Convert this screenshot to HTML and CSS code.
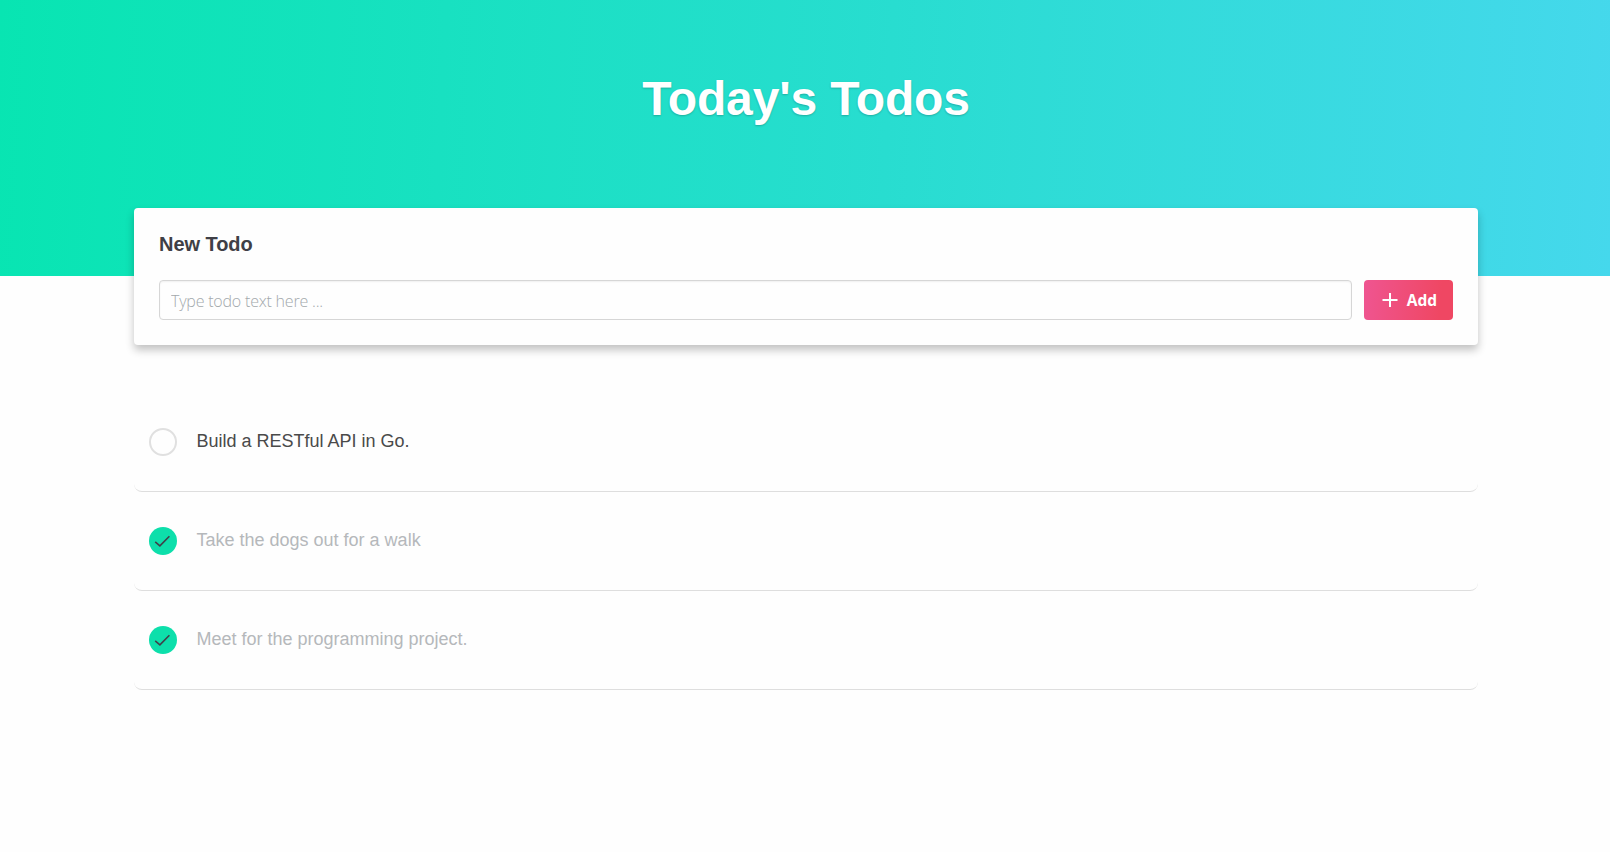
FILE: index.html
```
<!DOCTYPE html>
<html lang="en">
<head>
<meta charset="utf-8">
<title>Today's Todos</title>
<link rel="stylesheet" href="styles.css">
</head>
<body>
<header class="hero"><h1 class="hero-title">Today's Todos</h1></header>
<main class="container">
  <section class="card">
    <h2 class="card-title">New Todo</h2>
    <form class="form">
      <input class="input" type="text" placeholder="Type todo text here ...">
      <button class="button" type="button">
        <svg class="plus" viewBox="0 0 16 16"><path d="M8 1v14M.5 8h15"/></svg>
        <span>Add</span>
      </button>
    </form>
  </section>
  <ul class="list">
    <li class="todo"><span class="check"></span><span class="text">Build a RESTful API in Go.</span></li>
    <li class="todo done"><span class="check"><svg class="tick" viewBox="0 0 28 28"><path d="M6.2 14.8l4.7 4L20.4 9.2"/></svg></span><span class="text">Take the dogs out for a walk</span></li>
    <li class="todo done"><span class="check"><svg class="tick" viewBox="0 0 28 28"><path d="M6.2 14.8l4.7 4L20.4 9.2"/></svg></span><span class="text">Meet for the programming project.</span></li>
  </ul>
</main>
</body>
</html>
```
FILE: styles.css
```
* { box-sizing: border-box; }
body {
  margin: 0;
  min-height: 852px;
  background: #fefefe;
  color: #4a4a4a;
  font-family: "Liberation Sans", Arial, sans-serif;
}
.hero {
  height: 276px;
  padding: 71px 0 0 2px;
  background: linear-gradient(93deg, #08e5b2 0%, #28ddd0 55%, #45d8ec 100%);
  text-align: center;
}
.hero-title {
  margin: 0;
  color: #fff;
  font-size: 48px;
  line-height: 56px;
  letter-spacing: -.15px;
  text-shadow: 0 1px 2px rgba(0, 0, 0, .22);
}
.container { width: 1344px; margin: -68px 0 0 134px; }
.card {
  position: relative;
  height: 137px;
  padding: 24px 25px;
  background: #fefefe;
  border-radius: 4px;
  box-shadow: 0 5px 8px rgba(0, 0, 0, .24);
}
.card-title {
  margin: 0 0 24px;
  color: #3f3f46;
  font-size: 20px;
  line-height: 24px;
  letter-spacing: -.05px;
}
.form { display: flex; gap: 12px; }
.input {
  flex: 1;
  height: 40px;
  padding: 1px 11px 0;
  border: 1px solid #d6d6d6;
  border-radius: 4px;
  background: #fefefe;
  box-shadow: inset 0 1px 2px rgba(10, 10, 10, .06);
  font: 300 16px "Open Sans", sans-serif;
  letter-spacing: -.2px;
}
.input::placeholder { color: #a3a9ac; }
.button {
  display: flex;
  align-items: center;
  justify-content: center;
  gap: 9px;
  width: 89px;
  height: 40px;
  padding: 0 0 0 2px;
  border: 0;
  border-radius: 4px;
  background: linear-gradient(95deg, #ef5591, #ef4763 85%);
  color: #fff;
  font: 700 15.5px "Open Sans", sans-serif;
}
.plus { width: 16px; height: 16px; fill: none; stroke: #fff; stroke-width: 2; }
.list { margin: 48px 0 0; padding: 0; list-style: none; }
.todo {
  display: flex;
  align-items: center;
  height: 99px;
  padding: 0 15px;
  border-bottom: 1px solid #dedede;
  border-radius: 8px;
}
.check {
  width: 28px;
  height: 28px;
  margin-right: 19.5px;
  border: 2px solid #e0e0e0;
  border-radius: 50%;
}
.text { font-size: 18px; line-height: 24px; padding-bottom: 2px; }
.done .check { border: 0; background: #0ddfab; }
.done .text { color: #b5b8bb; }
.tick { display: block; fill: none; stroke: #40404a; stroke-width: 1.6; }
```
